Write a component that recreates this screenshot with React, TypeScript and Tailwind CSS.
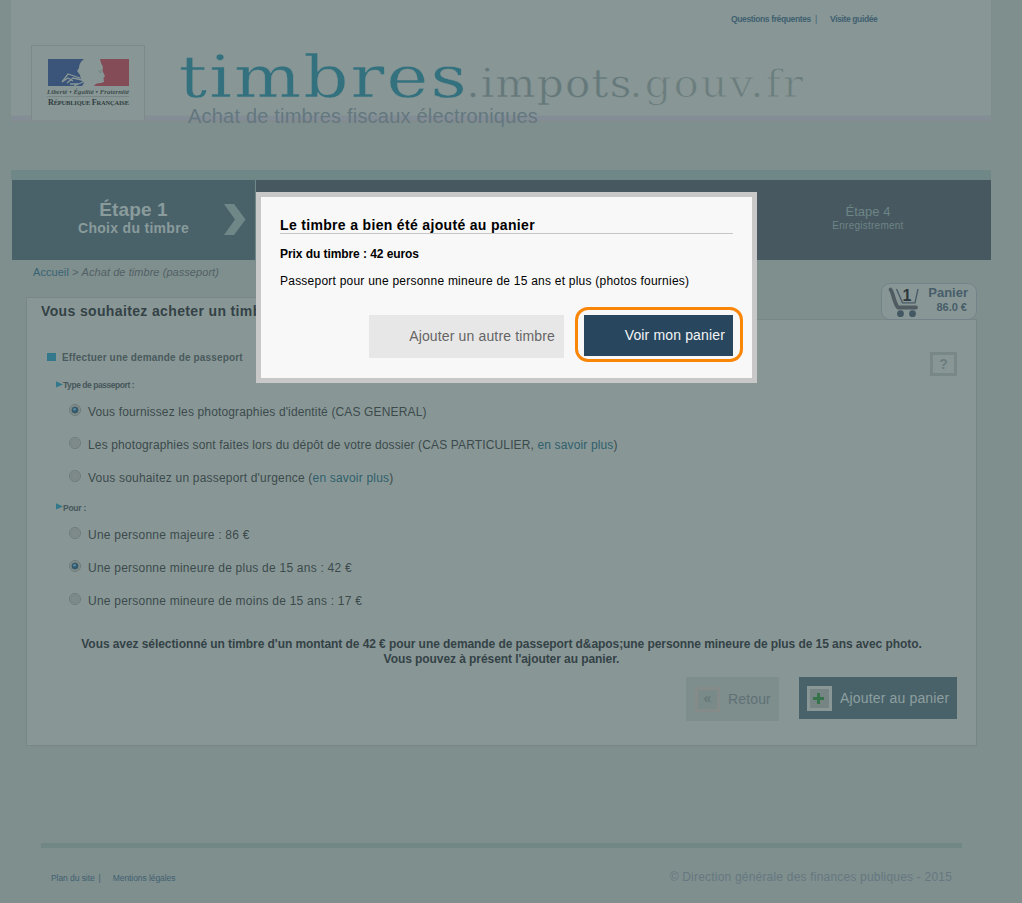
import React from "react";

type OptionProps = { checked?: boolean; children: React.ReactNode };

function Option({ checked, children }: OptionProps) {
  return (
    <div className="flex h-[33px] items-center pl-[42px] text-[12px] text-[#3c4a4c]">
      <svg className="-mt-[3px] mr-[7px] h-[12px] w-[12px]" viewBox="0 0 12 12">
        <circle cx="6" cy="6" r="5.5" fill="#84918f" stroke="#6d7a79" />
        <circle cx="6" cy="6" r="3.8" fill={checked ? "#84918f" : "#7d8b8a"} stroke="#75827f" strokeWidth=".6" />
        {checked && <circle cx="6" cy="6" r="3" fill="#2f5c72" stroke="#3b5866" />}
        {checked && <circle cx="5.6" cy="5.2" r="1.3" fill="#5c8ea0" />}
      </svg>
      <span className="whitespace-pre">{children}</span>
    </div>
  );
}

function Label({ children }: { children: React.ReactNode }) {
  return (
    <>
      <svg className="-mt-[3px] h-[7px] w-[7px]" viewBox="0 0 7 7">
        <path d="M0 0.2 7 3.4 0 6.6Z" fill="#33788b" />
      </svg>
      <span>{children}</span>
    </>
  );
}

function RepublicLogo() {
  return (
    <svg className="h-[75px] w-[114px]" viewBox="0 0 114 75">
      <rect x=".5" y=".5" width="113" height="75" fill="#889796" stroke="#7c8b8a" />
      <path d="M17 14H53C49 17 48 20 48 23L46 26 49 30 50 35 53 38 51 41H17Z" fill="#3b5479" />
      <path d="M69 14H98V41H63C64 39 66 38 70 38L73 37 72.500 33 74 31 71.500 26 72 22 70 18Z" fill="#834c56" />
      <path d="M31 37 37 29 43 31 49 33M31 37 37 33 42 36M36 38 42 33 51 35M39 39H47M43 41 52 37" fill="none" stroke="#889796" strokeWidth="1.3" />
      <path d="M67 26H70.500M68.500 27.500H70.500" stroke="#6c7b7a" strokeWidth=".7" />
      <text x="16" y="49" textLength="82" fontFamily="Liberation Serif, serif" fontStyle="italic" fontWeight="700" fontSize="6.8" fill="#3d4b4b">Liberté • Égalité • Fraternité</text>
      <path d="M16 51.5H98" stroke="#6c7a79" strokeWidth=".6" />
      <text x="17" y="60" textLength="81" fontFamily="Liberation Serif, serif" fontWeight="700" fontSize="6.4" fill="#303d3e"><tspan fontSize="8">R</tspan>ÉPUBLIQUE <tspan fontSize="8">F</tspan>RANÇAISE</text>
    </svg>
  );
}

function SiteName() {
  return (
    <svg className="h-[60px] w-[630px] overflow-visible" viewBox="0 0 630 60" fontFamily="DejaVu Serif, serif" stroke="#889796">
      <g transform="scale(1.22 1)">
        <text x="-1" y="47" fontSize="58" textLength="236" fill="#34717f" strokeWidth=".4">timbres</text>
      </g>
      <g transform="scale(1.08 1)">
        <text x="265" y="47" fontSize="39" textLength="153" fill="#65787a" strokeWidth=".6">.impots</text>
        <text x="416" y="47" fontSize="39" textLength="161" fill="#6c7d7d" strokeWidth=".9">.gouv.fr</text>
      </g>
    </svg>
  );
}

function CartBadge() {
  return (
    <div className="relative flex h-[37px] w-[96px] rounded-[9px] border border-[#74838a] bg-[#889796]">
      <svg className="h-[35px] w-[42px]" viewBox="0 0 42 35">
        <path d="M8.500 5.500C11 8 12 19 16 23.500H34" fill="none" stroke="#505b62" strokeWidth="3.8" strokeLinecap="round" strokeLinejoin="round" />
        <path d="M14.500 5 20.500 18.800H33L36 5" fill="none" stroke="#475964" strokeWidth="1.3" />
        <circle cx="18.5" cy="29.7" r="3.4" fill="#435863" />
        <circle cx="30.5" cy="29.7" r="3.4" fill="#435863" />
        <text x="20.500" y="17" fontFamily="Liberation Sans, sans-serif" fontSize="16" fontWeight="700" fill="#2c373e">1</text>
      </svg>
      <div className="flex flex-1 flex-col items-end pr-[8px] pt-[1px] font-bold text-[#475d69]">
        <span className="text-[13px] leading-[16px]">Panier</span>
        <span className="pr-[1px] text-[11px] leading-[13px]">86.0 €</span>
      </div>
    </div>
  );
}

function Dialog() {
  return (
    <div className="absolute left-[256px] top-[192px] h-[191px] w-[501px] border-[5px] border-[#c8c8c8] bg-[#f8f8f8] pl-[19px] pr-[19px] pt-[19px] text-black">
      <h2 className="h-[18px] border-b border-[#c6c6c6] text-[14px] font-bold leading-[18px] tracking-[0.33px]">Le timbre a bien été ajouté au panier</h2>
      <p className="mt-[12px] text-[12px] font-bold leading-[16px] tracking-[-0.07px]">Prix du timbre : 42 euros</p>
      <p className="mt-[11px] text-[12px] leading-[16px] tracking-[0.23px]">Passeport pour une personne mineure de 15 ans et plus (photos fournies)</p>
      <div className="mt-[18px] flex pl-[89px]">
        <button className="mt-[8px] h-[43px] w-[195px] shrink-0 bg-[#e7e7e7] pr-[9px] text-right text-[14px] tracking-[0.15px] text-[#656565]">Ajouter un autre timbre</button>
        <div className="ml-[11px] h-[55px] w-[168px] shrink-0 rounded-[13px] border-[3px] border-[#f98607] pl-[6px] pt-[5px]">
          <button className="h-[41px] w-[149px] bg-[#28475e] pr-[8px] text-right text-[14px] tracking-[0.15px] text-[#f2f4f6]">Voir mon panier</button>
        </div>
      </div>
    </div>
  );
}

export default function App() {
  return (
    <div className="relative h-[903px] w-[1022px] overflow-hidden bg-[#7f8f8e] pl-[11px] font-['Liberation_Sans',Arial,sans-serif]">
      <header className="h-[122px] w-[980px] bg-[linear-gradient(to_bottom,#889796_115px,#838d96_116px,#838d96_120px,#858c88_120px,#7f8b97_122px)]">
        <nav className="flex h-[45px] pl-[720px] pt-[13px] text-[8.5px] font-bold leading-[12px] tracking-[-0.37px] text-[#3f6070]">
          <span className="w-[81px] whitespace-nowrap">Questions fréquentes</span>
          <span className="ml-[3px] w-[3px] font-normal">|</span>
          <span className="ml-[12px]">Visite guidée</span>
        </nav>
        <div className="flex pl-[20px]">
          <RepublicLogo />
          <div className="ml-[35px] flex flex-col pt-[5px]">
            <SiteName />
            <p className="-mt-[6px] pl-[8px] text-[20px] leading-[24px] tracking-[0.2px] text-[#64777f]">Achat de timbres fiscaux électroniques</p>
          </div>
        </div>
      </header>

      <div className="mt-[48px] h-[10px] w-[980px] bg-[#6f8887]" />
      <div className="flex h-[80px] w-[980px] pl-[1px]">
        <div className="flex h-full w-[243px] items-center bg-[#49626a] text-center font-bold text-[#8a9b9b]">
          <div className="-mt-[5px] ml-[61px] w-[121px] whitespace-nowrap">
            <div className="text-[19px] leading-[20px] tracking-[0.1px]">Étape 1</div>
            <div className="text-[14px] leading-[16px] tracking-[0.3px]">Choix du timbre</div>
          </div>
          <svg className="-mt-[2px] ml-[30px] h-[31px] w-[22px]" viewBox="0 0 22 31">
            <path d="M0 0H10L21.500 15.500 10 31H0L11 15.500Z" fill="#6f8887" />
          </svg>
        </div>
        <div className="flex h-full flex-1 items-center justify-end border-l border-[#71878a] bg-[#485860] text-center text-[#6c8585]">
          <div className="-mt-[4px] mr-[68px] w-[110px]">
            <div className="text-[13px] leading-[16px]">Étape 4</div>
            <div className="text-[10px] leading-[12px] tracking-[0.25px]">Enregistrement</div>
          </div>
        </div>
      </div>

      <main className="ml-[15px] w-[951px]">
        <div className="flex h-[59px] justify-between">
          <div>
            <div className="h-[24px] pl-[7px] text-[11px] leading-[24px] tracking-[0.06px] text-[#526064]">
              <span className="text-[#376273]">Accueil</span> &gt; <i>Achat de timbre (passeport)</i>
            </div>
            <h1 className="relative mt-[13px] h-[23px] w-[400px] border-l border-t border-[#788786] bg-[#889796] pl-[14px] text-[14px] font-bold leading-[27px] tracking-[0.36px] text-[#344246]">Vous souhaitez acheter un timbre</h1>
          </div>
          <div className="pt-[23px]">
            <CartBadge />
          </div>
        </div>

        <section className="h-[427px] border border-[#788786] bg-[#889796] pt-[25px]">
          <div className="flex h-[24px] items-center pl-[20px] pr-[19px]">
            <span className="h-[8px] w-[9px] bg-[#33788b]" />
            <h2 className="ml-[6px] flex-1 text-[10px] font-bold tracking-[0.15px] text-[#4a5a5d]">Effectuer une demande de passeport</h2>
            <button className="mt-[7px] h-[24px] w-[27px] self-start border-[3px] border-[#788887] text-[14px] font-bold leading-[18px] text-[#6b7c7b]">?</button>
          </div>
          <div className="mt-[7px] flex h-[19px] items-center pl-[29px] text-[8.5px] font-bold tracking-[-0.45px] text-[#46565a]">
            <Label>Type de passeport :</Label>
          </div>
          <div className="tracking-[0.14px]">
            <Option checked>Vous fournissez les photographies d'identité (CAS GENERAL)</Option>
            <Option>
              Les photographies sont faites lors du dépôt de votre dossier (CAS PARTICULIER, <a className="text-[#2f5f6c]">en savoir plus</a>)
            </Option>
            <div className="tracking-[0.19px]">
              <Option>
                Vous souhaitez un passeport d'urgence (<a className="text-[#2f5f6c]">en savoir plus</a>)
              </Option>
            </div>
          </div>
          <div className="mt-[4px] flex h-[20px] items-center pl-[29px] text-[8.5px] font-bold tracking-[-0.25px] text-[#46565a]">
            <Label>Pour :</Label>
          </div>
          <div className="tracking-[0.23px]">
            <Option>Une personne majeure : 86 €</Option>
            <Option checked>Une personne mineure de plus de 15 ans : 42 €</Option>
            <Option>Une personne mineure de moins de 15 ans : 17 €</Option>
          </div>
          <p className="mt-[20px] text-center text-[12px] font-bold leading-[15px] tracking-[-0.07px] text-[#344246]">
            Vous avez sélectionné un timbre d'un montant de 42 € pour une demande de passeport d&amp;apos;une personne mineure de plus de 15 ans avec photo.
            <br />
            Vous pouvez à présent l'ajouter au panier.
          </p>
          <div className="mt-[10px] flex items-start justify-end pr-[19px]">
            <button className="flex h-[44px] w-[93px] items-center bg-[#7e8e8d] pl-[9px] text-[14px] tracking-[0.15px] text-[#607176]">
              <span className="h-[25px] w-[25px] border-[3px] border-[#848b89] bg-[#7a8a89] text-[14px] font-bold leading-[16px] text-[#657977]">«</span>
              <span className="ml-[8px]">Retour</span>
            </button>
            <button className="ml-[20px] flex h-[42px] w-[158px] items-center bg-[#49626a] pl-[8px] text-[14px] tracking-[0.16px] text-[#8d9f9f]">
              <svg className="h-[25px] w-[25px]" viewBox="0 0 25 25">
                <rect width="25" height="25" fill="#899897" />
                <rect x="3" y="3" width="19" height="19" fill="#768584" />
                <path d="M6 12.500H17M11.500 7V18" stroke="#35734a" strokeWidth="3" />
              </svg>
              <span className="ml-[8px] whitespace-nowrap">Ajouter au panier</span>
            </button>
          </div>
        </section>
      </main>

      <footer className="ml-[30px] mt-[97px] flex h-[60px] w-[921px] items-start border-t-[5px] border-[#708785] pl-[10px] pr-[10px]">
        <div className="flex pt-[24px] text-[8.5px] leading-[12px] tracking-[-0.07px] text-[#3f6070]">
          <span>Plan du site</span>
          <span className="ml-[4px]">|</span>
          <span className="ml-[12px]">Mentions légales</span>
        </div>
        <p className="ml-auto pt-[21px] text-[12px] leading-[16px] tracking-[0.2px] text-[#667780]">© Direction générale des finances publiques - 2015</p>
      </footer>

      <Dialog />
    </div>
  );
}
